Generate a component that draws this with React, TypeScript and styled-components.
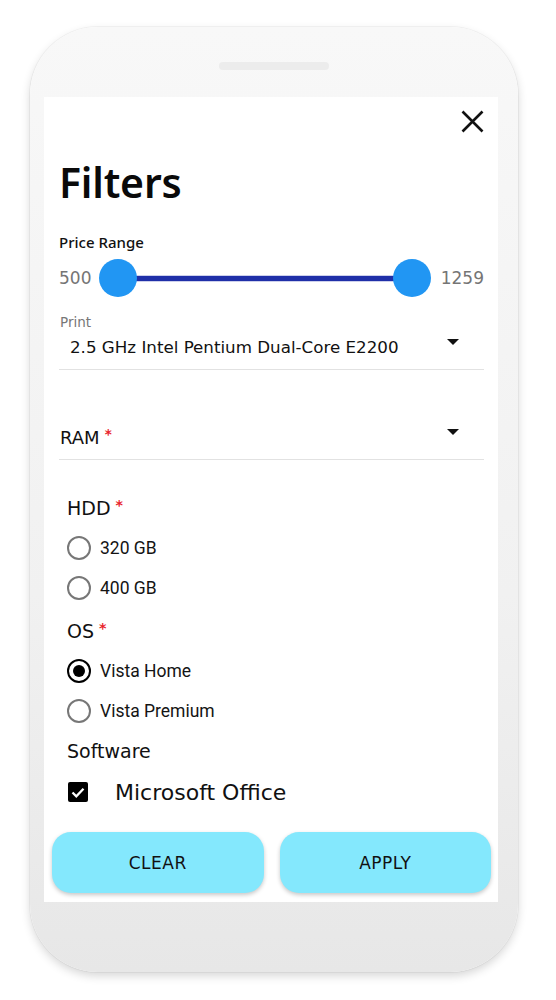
import React from 'react';
import styled, {createGlobalStyle} from 'styled-components';

const GlobalStyle = createGlobalStyle`
  html, body {
    margin: 0;
    padding: 0;
    background: #ffffff;
  }
  body {
    width: 556px;
    height: 1000px;
    overflow: hidden;
    font-family: "DejaVu Sans", "Noto Sans", sans-serif;
    color: #111;
  }
`;

const Stage = styled.div`
  width: 556px;
  height: 1000px;
  padding: 27px 0 0 30px;
  box-sizing: border-box;
`;

const Phone = styled.div`
  width: 488px;
  height: 945px;
  box-sizing: border-box;
  padding: 0 20px 0 14px;
  border-radius: 68px;
  background: linear-gradient(180deg, #f8f8f8 0%, #f1f1f1 60%, #e7e7e7 100%);
  box-shadow: 0 4px 10px rgba(0, 0, 0, 0.16), 0 0 0 1px rgba(0, 0, 0, 0.04);
  display: flex;
  flex-direction: column;
`;

const Bezel = styled.div`
  height: 70px;
  display: flex;
  justify-content: center;
  padding-left: 6px;
`;

const Speaker = styled.div`
  margin-top: 35px;
  width: 110px;
  height: 8px;
  border-radius: 4px;
  background: #ececec;
`;

const Screen = styled.div`
  width: 454px;
  height: 805px;
  background: #ffffff;
  display: flex;
  flex-direction: column;
`;

const Content = styled.div`
  padding: 0 14px 0 15px;
  display: flex;
  flex-direction: column;
`;

const TopBar = styled.div`
  height: 61px;
  display: flex;
  justify-content: flex-end;
  align-items: flex-start;
  padding-top: 13px;
  box-sizing: border-box;
`;

const CloseButton = styled.button`
  border: 0;
  background: none;
  padding: 0;
  width: 23px;
  height: 23px;
  cursor: pointer;
  display: block;
`;

const Title = styled.h1`
  margin: 0;
  height: 48px;
  line-height: 48px;
  font-family: "Noto Sans", sans-serif;
  font-weight: 600;
  font-size: 41px;
  letter-spacing: -0.2px;
  color: #0a0a0a;
`;

const SectionLabel = styled.div`
  margin-top: 24px;
  height: 24px;
  line-height: 24px;
  font-family: "Noto Sans", sans-serif;
  font-weight: 500;
  font-size: 15px;
  color: #111;
`;

const SliderRow = styled.div`
  margin-top: 4px;
  height: 40px;
  display: flex;
  align-items: center;
`;

const SliderValue = styled.span`
  font-size: 17px;
  color: #757575;
  line-height: 20px;
`;

const SliderTrack = styled.div`
  position: relative;
  flex: 1;
  height: 38px;
  margin: 0 10px 0 8px;
  display: flex;
  align-items: center;
  padding: 0 19px;
`;

const TrackLine = styled.div`
  flex: 1;
  height: 5px;
  background: #1f2fa8;
  box-shadow: 0 0 0 0.5px rgba(31, 47, 168, 0.45);
`;

const Thumb = styled.div<{$side: 'left' | 'right'}>`
  position: absolute;
  top: 0;
  ${p => (p.$side === 'left' ? 'left: 0;' : 'right: 0;')}
  width: 38px;
  height: 38px;
  border-radius: 50%;
  background: #2196f3;
`;

const Field = styled.div<{$gap: number}>`
  margin-top: ${p => p.$gap}px;
  padding-bottom: 9px;
  border-bottom: 1.5px solid #e2e2e2;
  display: flex;
  flex-direction: column;
`;

const FieldLabel = styled.div`
  height: 18px;
  line-height: 18px;
  font-size: 13.5px;
  color: #777;
  margin-left: 1px;
  margin-bottom: 3px;
`;

const FieldRow = styled.div<{$indent: number}>`
  height: 26px;
  display: flex;
  align-items: center;
  padding-left: ${p => p.$indent}px;
`;

const FieldValue = styled.span<{$size: number}>`
  flex: 1;
  font-size: ${p => p.$size}px;
  color: #111;
`;

const Caret = styled.svg`
  width: 12px;
  height: 6px;
  margin: 0 25px 10px 0;
  flex: none;
`;

const Required = styled.span`
  color: #e8232b;
  font-weight: 700;
  font-size: 0.75em;
  vertical-align: 0.35em;
  margin-left: 5px;
`;

const Group = styled.div`
  padding-left: 8px;
  display: flex;
  flex-direction: column;
`;

const GroupTitle = styled.div<{$gap: number}>`
  margin-top: ${p => p.$gap}px;
  height: 30px;
  line-height: 28px;
  font-size: 19px;
  color: #111;
`;

const OptionList = styled.div`
  margin-top: 7px;
  display: flex;
  flex-direction: column;
`;

const OptionRow = styled.label`
  height: 40px;
  display: flex;
  align-items: center;
  cursor: pointer;
`;

const RadioDot = styled.span<{$checked: boolean}>`
  width: 24px;
  height: 24px;
  box-sizing: border-box;
  border-radius: 50%;
  border: 2px solid ${p => (p.$checked ? '#000' : '#777')};
  display: flex;
  align-items: center;
  justify-content: center;
  margin-right: 9px;

  &::after {
    content: '';
    width: 12px;
    height: 12px;
    border-radius: 50%;
    background: #000;
    display: ${p => (p.$checked ? 'block' : 'none')};
  }
`;

const OptionText = styled.span`
  font-family: Roboto, "Noto Sans", sans-serif;
  font-size: 17.5px;
  color: #141414;
`;

const CheckRow = styled.label`
  margin-top: 5px;
  height: 40px;
  display: flex;
  align-items: center;
  padding-left: 1px;
  cursor: pointer;
`;

const CheckBox = styled.span`
  width: 20px;
  height: 20px;
  border-radius: 2px;
  background: #000;
  display: flex;
  align-items: center;
  justify-content: center;
  margin-right: 27px;
`;

const CheckText = styled.span`
  font-size: 22px;
  color: #111;
`;

const ButtonBar = styled.div`
  margin-top: 20px;
  padding: 0 7px 0 8px;
  display: flex;
  gap: 16px;
`;

const ActionButton = styled.button`
  flex: 1;
  height: 61px;
  border: 0;
  border-radius: 19px;
  background: #84e8fd;
  box-shadow: 0 2px 4px rgba(0, 0, 0, 0.22);
  font-family: "DejaVu Sans", sans-serif;
  font-size: 17px;
  letter-spacing: 0.5px;
  color: #111;
  cursor: pointer;
`;

function Radio({label, checked = false}: {label: string; checked?: boolean}) {
  return (
    <OptionRow>
      <RadioDot $checked={checked} />
      <OptionText>{label}</OptionText>
    </OptionRow>
  );
}

function DownCaret() {
  return (
    <Caret viewBox="0 0 12 6">
      <path d="M0 0h12L6 6z" fill="#111" />
    </Caret>
  );
}

export default function App() {
  return (
    <>
      <GlobalStyle />
      <Stage>
        <Phone>
          <Bezel>
            <Speaker />
          </Bezel>
          <Screen>
            <Content>
              <TopBar>
                <CloseButton aria-label="close">
                  <svg width="23" height="23" viewBox="0 0 23 23">
                    <path d="M1.5 1.5l20 20M21.5 1.5l-20 20" stroke="#111" strokeWidth="2.6" />
                  </svg>
                </CloseButton>
              </TopBar>
              <Title>Filters</Title>

              <SectionLabel>Price Range</SectionLabel>
              <SliderRow>
                <SliderValue>500</SliderValue>
                <SliderTrack>
                  <TrackLine />
                  <Thumb $side="left" />
                  <Thumb $side="right" />
                </SliderTrack>
                <SliderValue>1259</SliderValue>
              </SliderRow>

              <Field $gap={15}>
                <FieldLabel>Print</FieldLabel>
                <FieldRow $indent={11}>
                  <FieldValue $size={16.7}>2.5 GHz Intel Pentium Dual-Core E2200</FieldValue>
                  <DownCaret />
                </FieldRow>
              </Field>

              <Field $gap={54}>
                <FieldRow $indent={1}>
                  <FieldValue $size={18}>
                    RAM<Required>*</Required>
                  </FieldValue>
                  <DownCaret />
                </FieldRow>
              </Field>

              <Group>
                <GroupTitle $gap={31}>
                  HDD<Required>*</Required>
                </GroupTitle>
                <OptionList>
                  <Radio label="320 GB" />
                  <Radio label="400 GB" />
                </OptionList>

                <GroupTitle $gap={6}>
                  OS<Required>*</Required>
                </GroupTitle>
                <OptionList>
                  <Radio label="Vista Home" checked />
                  <Radio label="Vista Premium" />
                </OptionList>

                <GroupTitle $gap={6}>Software</GroupTitle>
                <CheckRow>
                  <CheckBox>
                    <svg width="14" height="11" viewBox="0 0 14 11">
                      <path d="M1.5 5.5l3.8 3.8L12.5 1.8" stroke="#fff" strokeWidth="2.3" fill="none" />
                    </svg>
                  </CheckBox>
                  <CheckText>Microsoft Office</CheckText>
                </CheckRow>
              </Group>
            </Content>

            <ButtonBar>
              <ActionButton>CLEAR</ActionButton>
              <ActionButton>APPLY</ActionButton>
            </ButtonBar>
          </Screen>
        </Phone>
      </Stage>
    </>
  );
}
